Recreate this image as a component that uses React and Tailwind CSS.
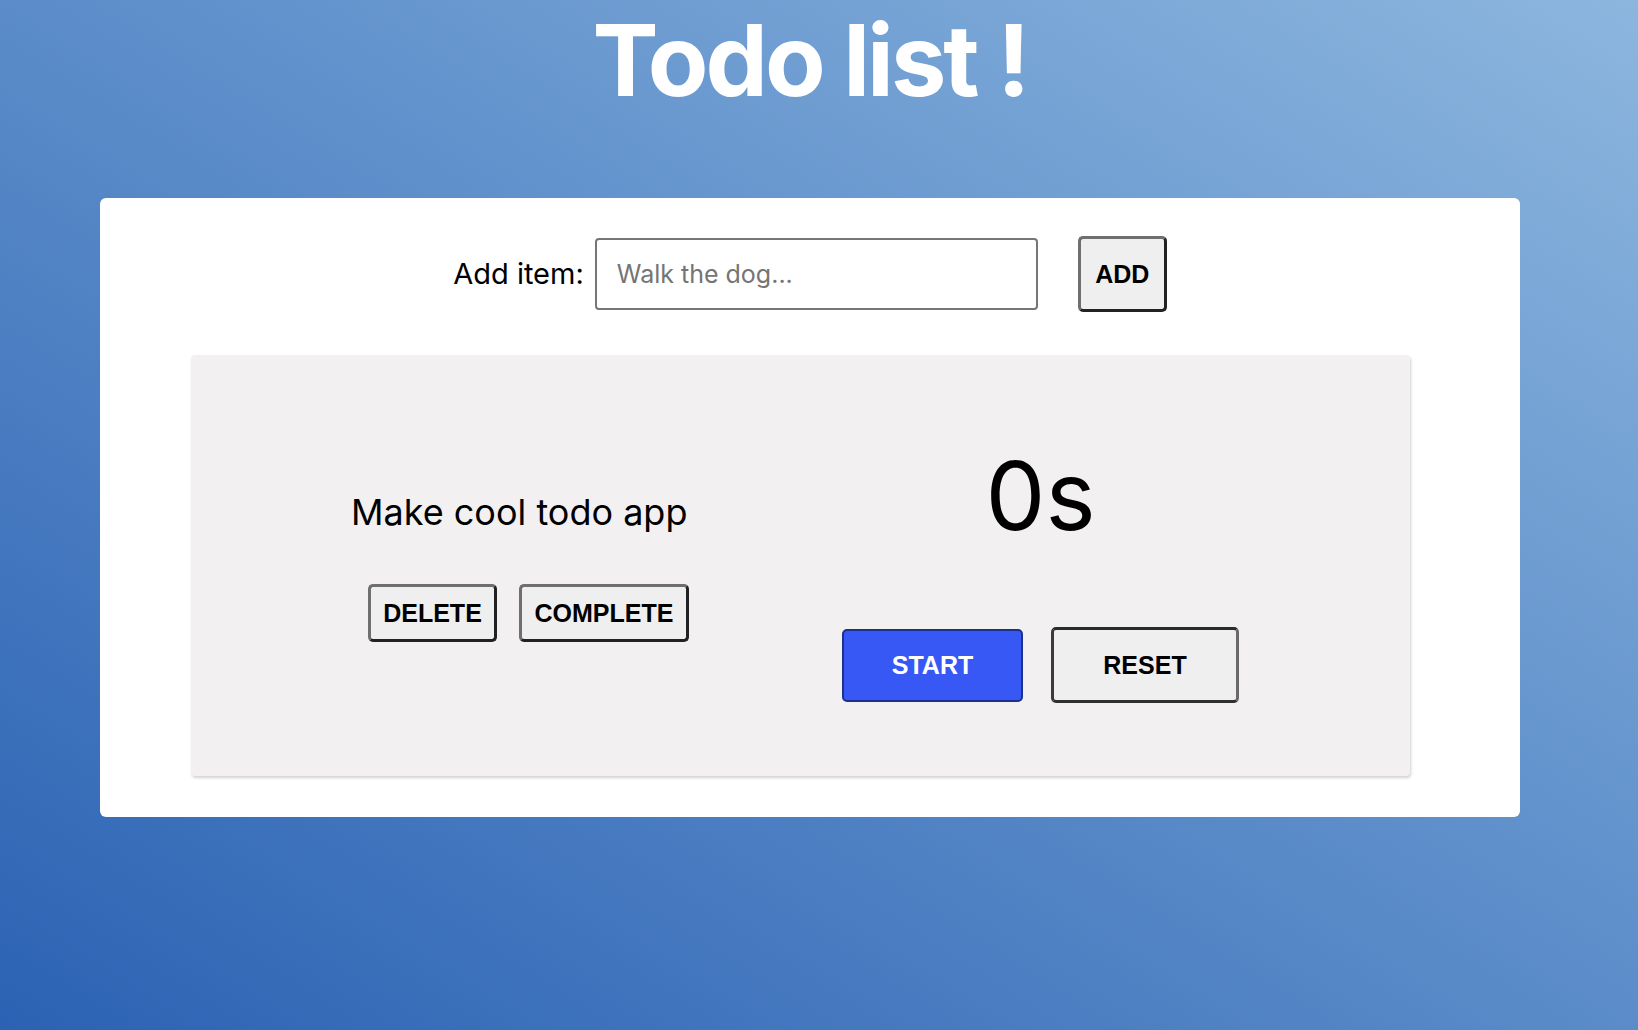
import React, { useState } from 'react';

const sans = "font-['Inter','Liberation_Sans',sans-serif]";
const arial = "font-['Liberation_Sans',Arial,sans-serif]";

const grayBtn = `${arial} bg-[#efefef] text-black font-bold text-[25px] leading-none rounded-[5px] border-[3px] border-t-[#6f6f6f] border-l-[#6f6f6f] border-r-[#222222] border-b-[#222222]`;

export default function App() {
  const [text, setText] = useState('');
  const [todos] = useState([{ id: 1, title: 'Make cool todo app' }]);
  const [seconds] = useState(0);

  return (
    <div className="min-h-screen w-full bg-linear-to-tr from-[#2b62b3] to-[#8cb6de]">
      <div className="w-[1420px] ml-[100px] flex flex-col">
        {/* title */}
        <h1 className={`${sans} mt-[11px] text-center text-white font-bold text-[99px] leading-none tracking-[-0.03em]`}>
          Todo list !
        </h1>

        {/* card */}
        <div className="mt-[88px] bg-white rounded-md pt-[38px] pb-[41px] flex flex-col">
          <div className="flex items-center justify-center">
            <label className={`${sans} text-[29px] text-black`}>Add item:</label>
            <input
              value={text}
              onChange={(e) => setText(e.target.value)}
              placeholder="Walk the dog..."
              className={`${sans} ml-[11px] w-[443px] h-[72px] border-2 border-[#767676] rounded-[4px] pl-[20px] text-[25px] placeholder:text-[#757575] outline-none bg-white`}
            />
            <button className={`${grayBtn} ml-[40px] w-[89px] h-[76px]`}>ADD</button>
          </div>

          {/* todo item */}
          {todos.map((t) => (
            <div
              key={t.id}
              className="mt-[43px] ml-[91px] w-[1219px] h-[421px] bg-[#f2f0f1] rounded-[4px] shadow-[1px_2px_3px_rgba(0,0,0,0.18)] flex items-start pl-[160px]"
            >
              <div className="mt-[135px] w-[338px] flex flex-col">
                <p className={`${sans} text-[36px] leading-[44px] text-black whitespace-nowrap`}>{t.title}</p>
                <div className="mt-[50px] ml-[17px] flex gap-[22px]">
                  <button className={`${grayBtn} w-[129px] h-[58px]`}>DELETE</button>
                  <button className={`${grayBtn} w-[170px] h-[58px]`}>COMPLETE</button>
                </div>
              </div>

              <div className="mt-[93px] ml-[153px] w-[397px] flex flex-col items-center">
                <div className={`${sans} text-[95px] leading-none text-black`}>{seconds}s</div>
                <div className="mt-[84px] flex items-center gap-[28px]">
                  <button className={`${arial} w-[181px] h-[73px] bg-[#3858f6] text-white font-bold text-[25px] leading-none rounded-[5px] border-2 border-[#1b318e]`}>
                    START
                  </button>
                  <button className={`${arial} w-[188px] h-[76px] bg-[#efefef] text-black font-bold text-[25px] leading-none rounded-[5px] border-[3px] border-t-[#2a2a2a] border-l-[#3a3a3a] border-r-[#6a6a6a] border-b-[#303030]`}>
                    RESET
                  </button>
                </div>
              </div>
            </div>
          ))}
        </div>
      </div>
    </div>
  );
}
